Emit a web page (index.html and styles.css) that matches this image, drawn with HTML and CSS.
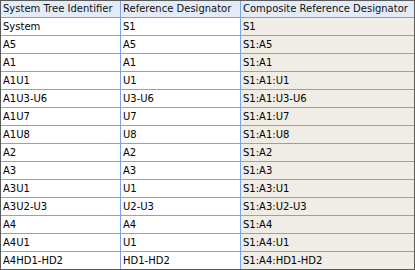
FILE: index.html
```html
<!DOCTYPE html>
<html>
<head>
<meta charset="utf-8">
<link rel="stylesheet" href="styles.css">
</head>
<body>
<div class="grid">
  <div class="cell head">System Tree Identifier</div>
  <div class="cell head">Reference Designator</div>
  <div class="cell head">Composite Reference Designator</div>

  <div class="cell">System</div><div class="cell">S1</div><div class="cell comp">S1</div>
  <div class="cell">A5</div><div class="cell">A5</div><div class="cell comp">S1:A5</div>
  <div class="cell">A1</div><div class="cell">A1</div><div class="cell comp">S1:A1</div>
  <div class="cell">A1U1</div><div class="cell">U1</div><div class="cell comp">S1:A1:U1</div>
  <div class="cell">A1U3-U6</div><div class="cell">U3-U6</div><div class="cell comp">S1:A1:U3-U6</div>
  <div class="cell">A1U7</div><div class="cell">U7</div><div class="cell comp">S1:A1:U7</div>
  <div class="cell">A1U8</div><div class="cell">U8</div><div class="cell comp">S1:A1:U8</div>
  <div class="cell">A2</div><div class="cell">A2</div><div class="cell comp">S1:A2</div>
  <div class="cell">A3</div><div class="cell">A3</div><div class="cell comp">S1:A3</div>
  <div class="cell">A3U1</div><div class="cell">U1</div><div class="cell comp">S1:A3:U1</div>
  <div class="cell">A3U2-U3</div><div class="cell">U2-U3</div><div class="cell comp">S1:A3:U2-U3</div>
  <div class="cell">A4</div><div class="cell">A4</div><div class="cell comp">S1:A4</div>
  <div class="cell">A4U1</div><div class="cell">U1</div><div class="cell comp">S1:A4:U1</div>
  <div class="cell">A4HD1-HD2</div><div class="cell">HD1-HD2</div><div class="cell comp">S1:A4:HD1-HD2</div>
</div>
</body>
</html>
```
FILE: styles.css
```css
html, body {
  margin: 0;
  padding: 0;
  background: #ffffff;
}
.grid {
  display: grid;
  grid-template-columns: 119px 119px 173px;
  grid-template-rows: 16px repeat(14, 17px);
  gap: 1px;
  background: #7aa4e6;
  border: 1px solid #5a5a5a;
  width: 413px;
  height: 268px;
  font-family: "DejaVu Sans", sans-serif;
  font-size: 10px;
  color: #000;
}
.cell {
  background: #ffffff;
  padding-left: 2px;
  line-height: 17px;
  white-space: nowrap;
  overflow: hidden;
}
.head {
  background: #e3ebf8;
  line-height: 16px;
  color: #111;
}
.comp {
  background: #efede6;
}
```
